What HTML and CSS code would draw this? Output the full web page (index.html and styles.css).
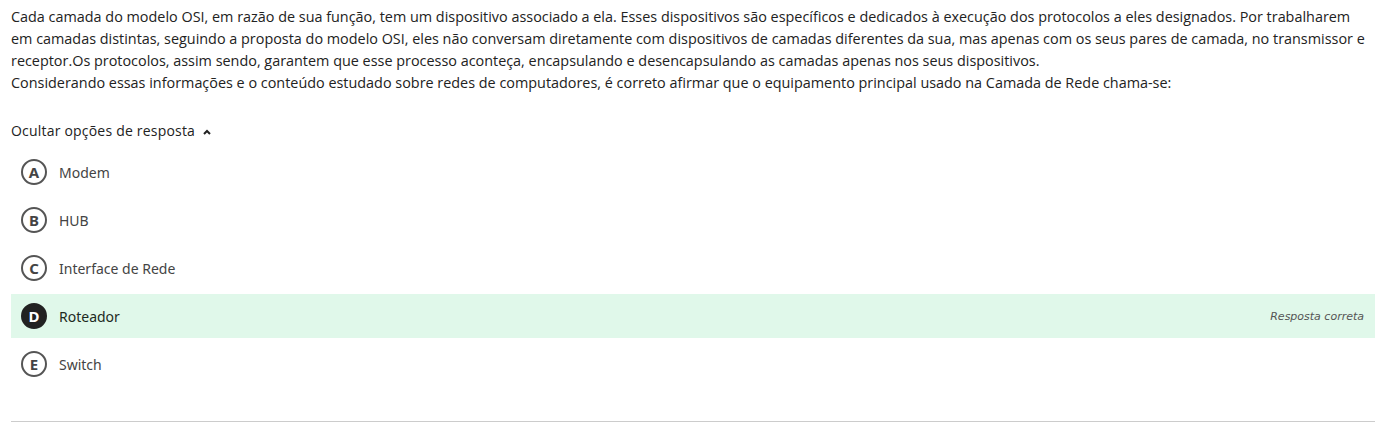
FILE: index.html
```html
<!DOCTYPE html>
<html lang="pt">
<head>
<meta charset="utf-8">
<link rel="stylesheet" href="styles.css">
</head>
<body>
<div class="page">
  <div class="question">
    <p>Cada camada do modelo OSI, em razão de sua função, tem um dispositivo associado a ela. Esses dispositivos são específicos e dedicados à execução dos protocolos a eles designados. Por trabalharem em camadas distintas, seguindo a proposta do modelo OSI, eles não conversam diretamente com dispositivos de camadas diferentes da sua, mas apenas com os seus pares de camada, no transmissor e receptor.Os protocolos, assim sendo, garantem que esse processo aconteça, encapsulando e desencapsulando as camadas apenas nos seus dispositivos.</p>
    <p>Considerando essas informações e o conteúdo estudado sobre redes de computadores, é correto afirmar que o equipamento principal usado na Camada de Rede chama-se:</p>
  </div>
  <div class="toggle">Ocultar opções de resposta
    <svg class="chev" width="10" height="8" viewBox="0 0 10 8"><path d="M2 6 L5 3 L8 6" fill="none" stroke="#222" stroke-width="2"/></svg>
  </div>
  <ul class="options">
    <li class="opt"><span class="letter">A</span><span class="label">Modem</span></li>
    <li class="opt"><span class="letter">B</span><span class="label">HUB</span></li>
    <li class="opt"><span class="letter">C</span><span class="label">Interface de Rede</span></li>
    <li class="opt correct"><span class="letter">D</span><span class="label">Roteador</span><span class="tag">Resposta correta</span></li>
    <li class="opt"><span class="letter">E</span><span class="label">Switch</span></li>
  </ul>
  <hr class="sep">
</div>
</body>
</html>
```
FILE: styles.css
```css
html, body { margin: 0; padding: 0; background: #fff; }
.page {
  padding: 6px 15px 0 11px;
  font-family: "Open Sans", "Liberation Sans", sans-serif;
  color: #222;
}
.question p {
  margin: 0;
  font-size: 14.4px;
  line-height: 22px;
}
.toggle {
  margin-top: 26px;
  height: 22px;
  line-height: 22px;
  font-size: 14px;
  letter-spacing: 0.2px;
  color: #222;
  display: flex;
  align-items: center;
  gap: 7px;
}
.chev { margin-top: 1px; }
.options {
  list-style: none;
  margin: 8px 0 0 0;
  padding: 0;
  display: flex;
  flex-direction: column;
  gap: 4px;
}
.opt {
  height: 44px;
  display: flex;
  align-items: center;
  padding: 0 11px 0 10px;
}
.letter {
  width: 26px;
  height: 26px;
  box-sizing: border-box;
  border: 2px solid #555;
  border-radius: 50%;
  display: flex;
  align-items: center;
  justify-content: center;
  font-size: 15px;
  font-weight: 700;
  color: #444;
  font-family: "Noto Sans", "Open Sans", sans-serif;
}
.label {
  margin-left: 12px;
  font-size: 14px;
  color: #444;
  font-family: "Noto Sans", "Open Sans", sans-serif;
}
.correct { background: #e0f8ea; }
.correct .letter {
  background: #222;
  border-color: #222;
  color: #fff;
}
.correct .label { color: #1d2a22; }
.tag {
  margin-left: auto;
  font-size: 11px;
  font-style: italic;
  color: #555;
  font-family: "DejaVu Sans", sans-serif;
}
.sep {
  margin: 35px 0 0 0;
  border: 0;
  border-top: 1px solid #ccc;
}
```
